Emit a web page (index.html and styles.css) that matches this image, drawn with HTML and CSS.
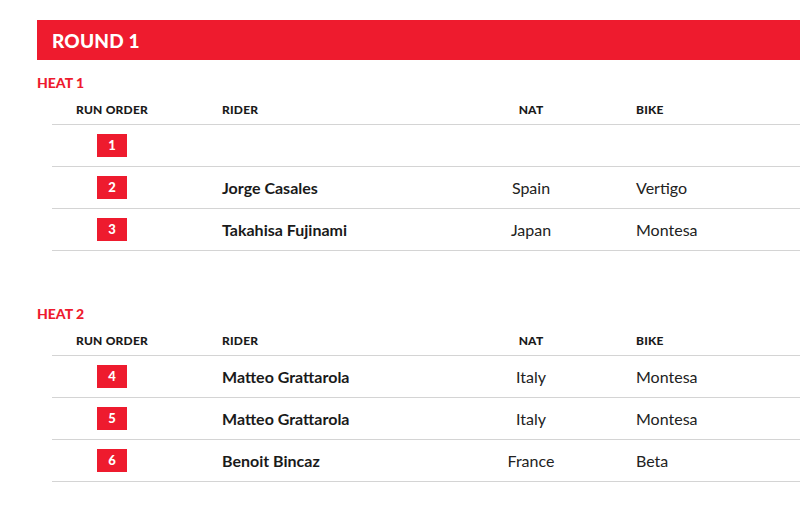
FILE: index.html
```html
<!DOCTYPE html>
<html>
<head>
<meta charset="utf-8">
<link rel="stylesheet" href="styles.css">
</head>
<body>
<div class="page">
  <h2 class="round">ROUND 1</h2>

  <section class="heat">
    <h3 class="heat-title">HEAT 1</h3>
    <div class="table">
      <div class="row head">
        <div class="c-order">RUN ORDER</div>
        <div class="c-rider">RIDER</div>
        <div class="c-nat">NAT</div>
        <div class="c-bike">BIKE</div>
      </div>
      <div class="row">
        <div class="c-order"><span class="badge">1</span></div>
        <div class="c-rider"></div>
        <div class="c-nat"></div>
        <div class="c-bike"></div>
      </div>
      <div class="row">
        <div class="c-order"><span class="badge">2</span></div>
        <div class="c-rider name">Jorge Casales</div>
        <div class="c-nat">Spain</div>
        <div class="c-bike">Vertigo</div>
      </div>
      <div class="row">
        <div class="c-order"><span class="badge">3</span></div>
        <div class="c-rider name">Takahisa Fujinami</div>
        <div class="c-nat">Japan</div>
        <div class="c-bike">Montesa</div>
      </div>
    </div>
  </section>

  <section class="heat">
    <h3 class="heat-title">HEAT 2</h3>
    <div class="table">
      <div class="row head">
        <div class="c-order">RUN ORDER</div>
        <div class="c-rider">RIDER</div>
        <div class="c-nat">NAT</div>
        <div class="c-bike">BIKE</div>
      </div>
      <div class="row">
        <div class="c-order"><span class="badge">4</span></div>
        <div class="c-rider name">Matteo Grattarola</div>
        <div class="c-nat">Italy</div>
        <div class="c-bike">Montesa</div>
      </div>
      <div class="row">
        <div class="c-order"><span class="badge">5</span></div>
        <div class="c-rider name">Matteo Grattarola</div>
        <div class="c-nat">Italy</div>
        <div class="c-bike">Montesa</div>
      </div>
      <div class="row">
        <div class="c-order"><span class="badge">6</span></div>
        <div class="c-rider name">Benoit Bincaz</div>
        <div class="c-nat">France</div>
        <div class="c-bike">Beta</div>
      </div>
    </div>
  </section>
</div>
</body>
</html>
```

FILE: styles.css
```css
html, body {
  margin: 0;
  padding: 0;
  background: #fff;
}
body {
  font-family: "Lato", "Open Sans", sans-serif;
  color: #222;
  overflow: hidden;
}
.page {
  padding: 20px 0 0 37px;
  width: 790px;
}
.round {
  margin: 0;
  height: 40px;
  background: #ee1b2e;
  color: #fff;
  font-size: 19px;
  font-weight: 900;
  line-height: 42px;
  padding-left: 15px;
  letter-spacing: 0.2px;
}
.heat {
  margin-top: 13px;
}
.heat + .heat {
  margin-top: 53px;
}
.heat-title {
  margin: 0;
  height: 21px;
  line-height: 20px;
  color: #ee1b2e;
  font-size: 14px;
  font-weight: 900;
}
.table {
  margin-left: 15px;
}
.row {
  display: grid;
  grid-template-columns: 120px 300px 118px 1fr;
  align-items: center;
  height: 41px;
  border-bottom: 1px solid #d4d4d4;
  font-size: 16px;
}
.row.head {
  height: 30px;
  font-size: 12px;
  font-weight: 900;
  color: #1a1a1a;
  letter-spacing: 0.2px;
}
.c-order {
  text-align: center;
}
.c-rider {
  padding-left: 50px;
}
.c-nat {
  text-align: center;
}
.c-bike {
  padding-left: 46px;
}
.name {
  font-weight: 700;
  color: #1a1a1a;
}
.badge {
  display: inline-block;
  width: 30px;
  height: 23px;
  line-height: 23px;
  background: #ee1b2e;
  color: #fff;
  font-weight: 900;
  font-size: 13px;
  text-align: center;
  vertical-align: middle;
}
```
